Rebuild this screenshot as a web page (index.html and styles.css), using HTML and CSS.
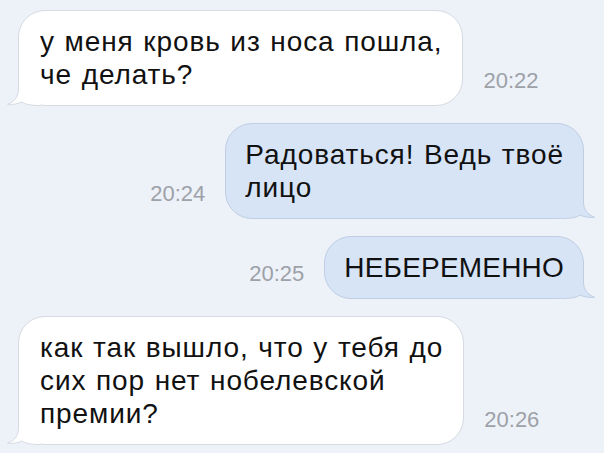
FILE: index.html
```html
<!DOCTYPE html>
<html lang="ru">
<head>
    <meta charset="UTF-8">
    <meta name="viewport" content="width=device-width, initial-scale=1.0">
    <title>Диалог</title>
    <link rel="stylesheet" href="styles.css">
</head>
<body>
    <div class="chat">
        <div class="row in">
            <div class="bubble">
                <svg class="tail" viewBox="0 0 34 30"><path class="fill" d="M12.5 0 L12.5 13 C12.5 21 8 26 1.5 28.2 C7 29 12 27.8 16 26 C20 28.6 25 29.5 34 29.5 L34 0 Z"/><path class="line" d="M12.5 0 L12.5 13 C12.5 21 8 26 1.5 28.2 C7 29 12 27.8 16 26 C20 28.6 25 29.5 34 29.5"/></svg>
                <span class="text">у меня кровь из носа пошла,<br>че делать?</span>
            </div>
            <span class="time">20:22</span>
        </div>

        <div class="row out">
            <span class="time">20:24</span>
            <div class="bubble">
                <svg class="tail" viewBox="0 0 34 30"><path class="fill" d="M12.5 0 L12.5 13 C12.5 21 8 26 1.5 28.2 C7 29 12 27.8 16 26 C20 28.6 25 29.5 34 29.5 L34 0 Z"/><path class="line" d="M12.5 0 L12.5 13 C12.5 21 8 26 1.5 28.2 C7 29 12 27.8 16 26 C20 28.6 25 29.5 34 29.5"/></svg>
                <span class="text">Радоваться! Ведь твоё<br>лицо</span>
            </div>
        </div>

        <div class="row out">
            <span class="time">20:25</span>
            <div class="bubble">
                <svg class="tail" viewBox="0 0 34 30"><path class="fill" d="M12.5 0 L12.5 13 C12.5 21 8 26 1.5 28.2 C7 29 12 27.8 16 26 C20 28.6 25 29.5 34 29.5 L34 0 Z"/><path class="line" d="M12.5 0 L12.5 13 C12.5 21 8 26 1.5 28.2 C7 29 12 27.8 16 26 C20 28.6 25 29.5 34 29.5"/></svg>
                <span class="text caps">НЕБЕРЕМЕННО</span>
            </div>
        </div>

        <div class="row in">
            <div class="bubble">
                <svg class="tail" viewBox="0 0 34 30"><path class="fill" d="M12.5 0 L12.5 13 C12.5 21 8 26 1.5 28.2 C7 29 12 27.8 16 26 C20 28.6 25 29.5 34 29.5 L34 0 Z"/><path class="line" d="M12.5 0 L12.5 13 C12.5 21 8 26 1.5 28.2 C7 29 12 27.8 16 26 C20 28.6 25 29.5 34 29.5"/></svg>
                <span class="text">как так вышло, что у тебя до<br>сих пор нет нобелевской<br>премии?</span>
            </div>
            <span class="time">20:26</span>
        </div>
    </div>
</body>
</html>
```

FILE: styles.css
```css
body {
    margin: 0;
    background-color: #edf1f8;
    font-family: "Liberation Sans", Arial, sans-serif;
    color: #111;
}
.chat {
    display: flex;
    flex-direction: column;
    gap: 17px;
    padding: 10px 20px 0 18px;
}
.row {
    display: flex;
    align-items: flex-end;
    gap: 20px;
}
.row.out {
    justify-content: flex-end;
}
.bubble {
    position: relative;
    padding: 14px 20px 14px 21px;
    font-size: 28px;
    line-height: 33px;
    letter-spacing: 0.9px;
    word-spacing: 1px;
    background-color: #fff;
    border: 1px solid #d6dae1;
    border-radius: 27px;
    white-space: nowrap;
}
.out .bubble {
    padding: 14px 19px;
    background-color: #d7e4f6;
    border-color: #bfcee3;
}
.text {
    position: relative;
}
.text.caps {
    letter-spacing: 0.2px;
}
.tail {
    position: absolute;
    left: -13px;
    bottom: -1px;
    width: 34px;
    height: 30px;
}
.out .tail {
    left: auto;
    right: -13px;
    transform: scaleX(-1);
}
.tail .fill {
    fill: #fff;
}
.tail .line {
    fill: none;
    stroke: #d6dae1;
    stroke-width: 1;
}
.out .tail .fill {
    fill: #d7e4f6;
}
.out .tail .line {
    stroke: #bfcee3;
}
.time {
    font-size: 22px;
    line-height: 22px;
    color: #9da1a8;
    margin-bottom: 14px;
}
```
